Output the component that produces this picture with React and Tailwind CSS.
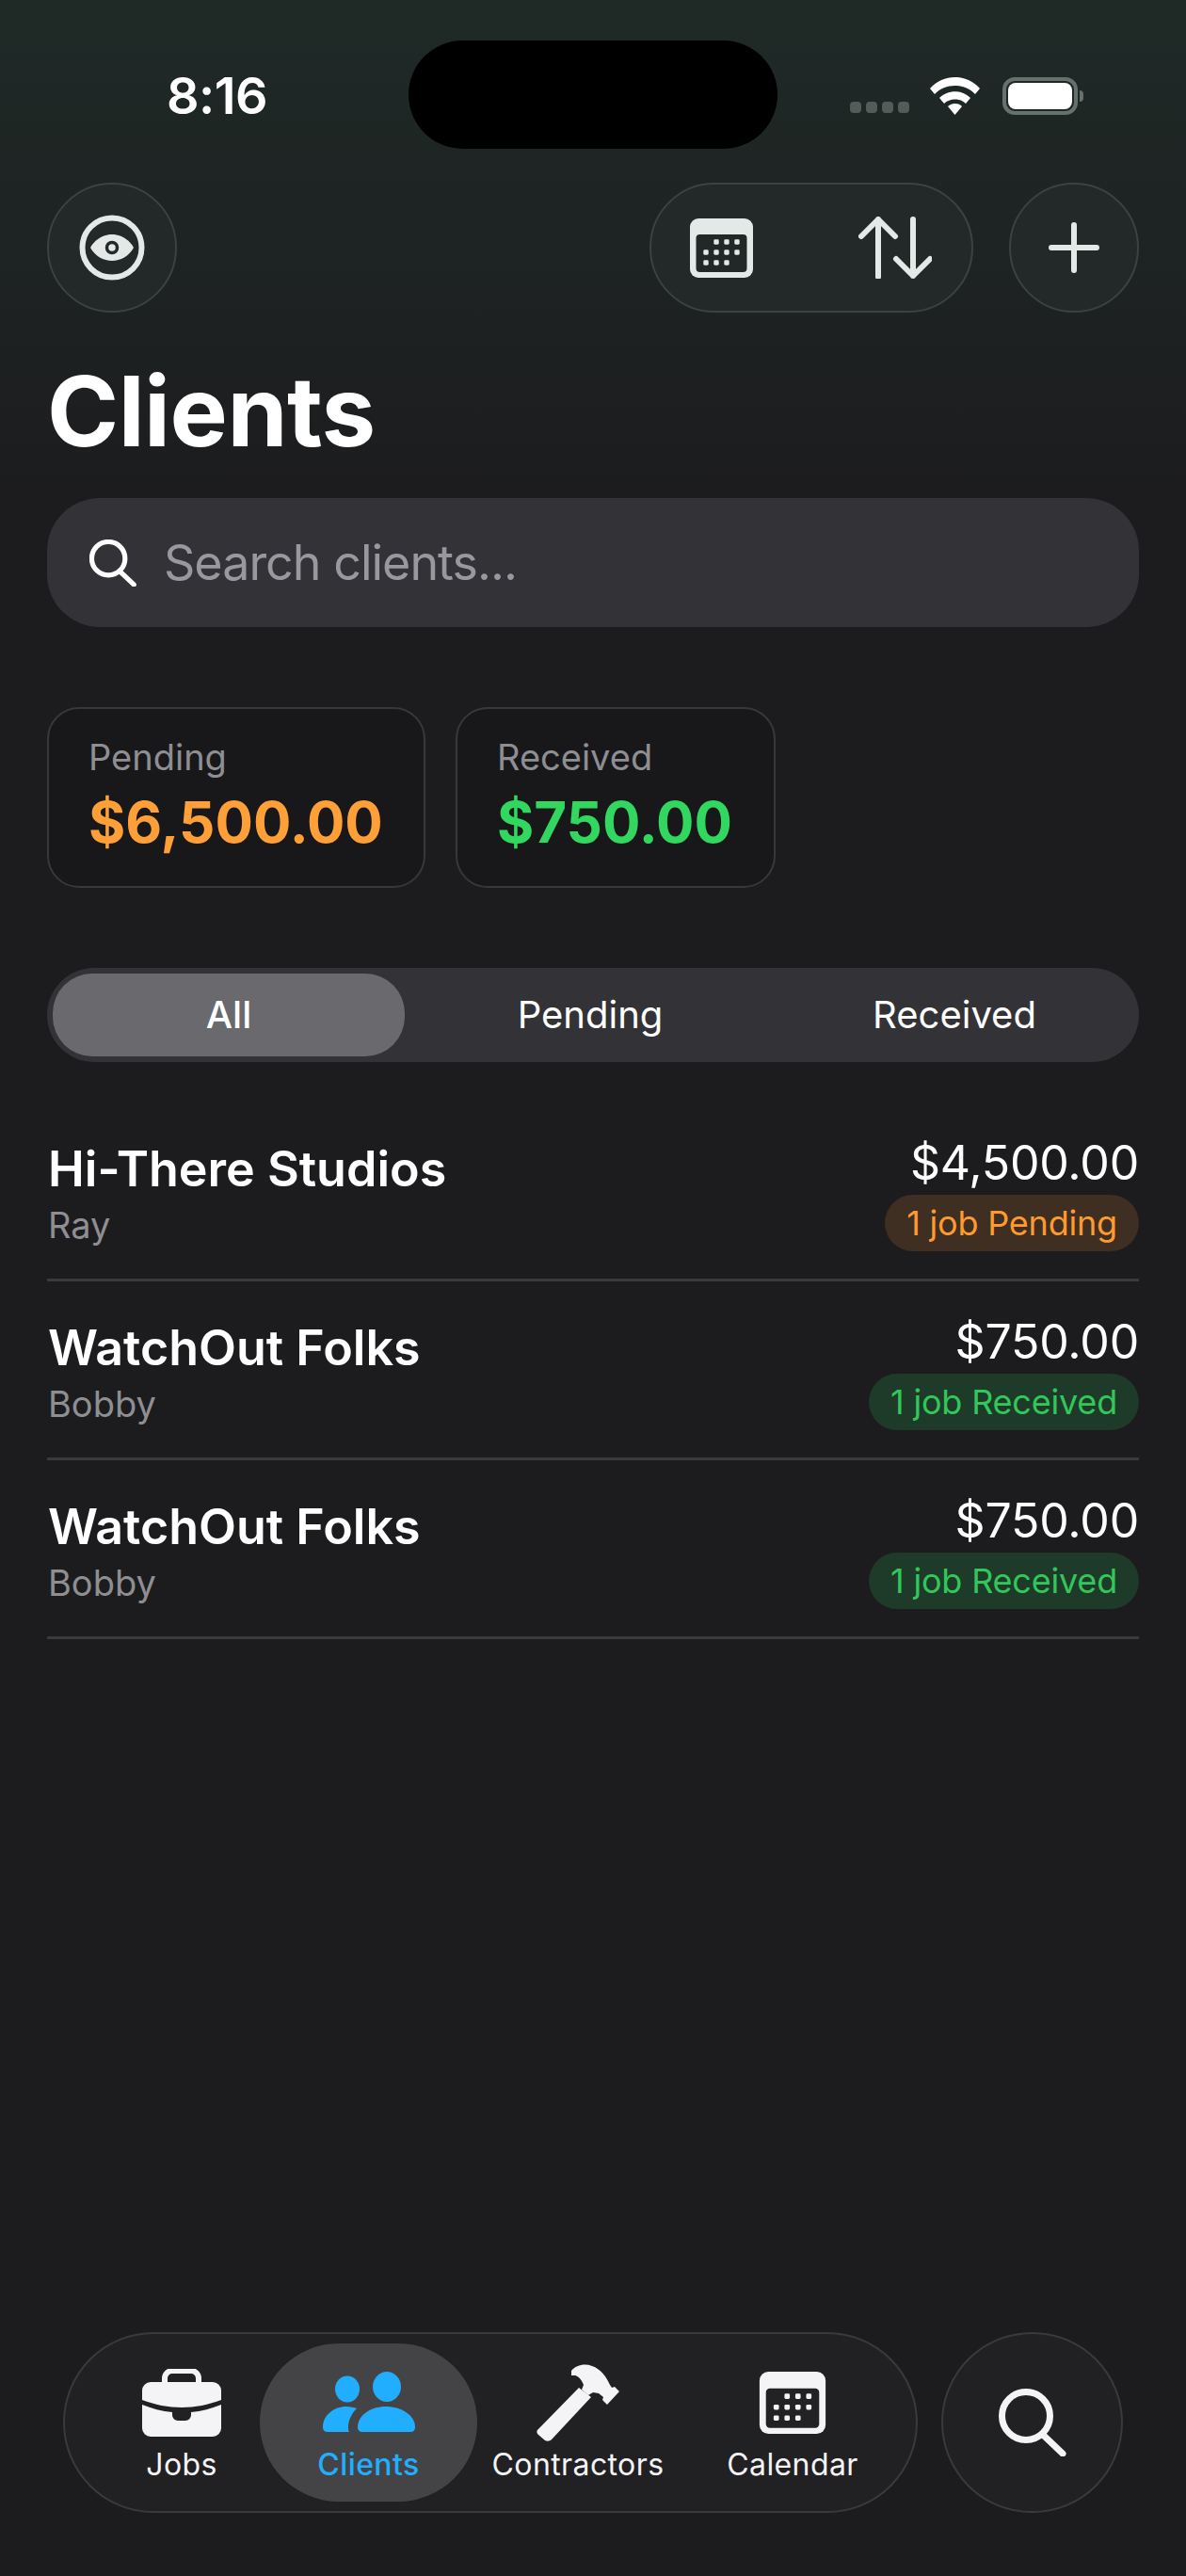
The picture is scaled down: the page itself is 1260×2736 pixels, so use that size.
import React from 'react';

const CalendarIcon = ({ className, hole = '#222828' }) => (
  <svg className={className} viewBox="0 0 67 63" fill="none">
    <rect width="67" height="63" rx="9" fill="currentColor" />
    <rect x="6.5" y="17" width="54" height="40" rx="4" fill={hole} />
    {[
      [28, 25], [39, 25], [50, 25],
      [17, 36], [28, 36], [39, 36], [50, 36],
      [17, 47], [28, 47], [39, 47],
    ].map(([x, y]) => (
      <rect key={`${x}-${y}`} x={x - 2.7} y={y - 2.7} width="5.4" height="5.4" rx="1.4" fill="currentColor" />
    ))}
  </svg>
);

const SearchIcon = ({ className, stroke = 7 }) => (
  <svg className={className} viewBox="0 0 72 72" fill="none" stroke="currentColor" strokeWidth={stroke} strokeLinecap="round">
    <circle cx="29" cy="29" r="25.5" />
    <path d="M47 49 L68 69" />
  </svg>
);

const Briefcase = ({ className }) => (
  <svg className={className} viewBox="0 0 84 72" fill="none">
    <path d="M24 17V10a8 8 0 0 1 8-8h20a8 8 0 0 1 8 8v7" stroke="currentColor" strokeWidth="6" />
    <path d="M9 14h66a9 9 0 0 1 9 9v10c-13 5-28 8-42 8s-29-3-42-8V23a9 9 0 0 1 9-9z" fill="currentColor" />
    <path d="M0 38c10 4 21 7 32 8v3a6 6 0 0 0 6 6h8a6 6 0 0 0 6-6v-3c11-1 22-4 32-8v25a9 9 0 0 1-9 9H9a9 9 0 0 1-9-9z" fill="currentColor" />
  </svg>
);

const Users = ({ className }) => (
  <svg className={className} viewBox="0 0 98 65" fill="currentColor">
    <ellipse cx="26" cy="18.5" rx="13" ry="14" />
    <ellipse cx="68" cy="16" rx="15" ry="16" />
    <path d="M0 59C0 46 12 37 25 37c4 0 8 1 11 2-5 5-9 12-9 20 0 2 0 4 1 5H5c-3 0-5-2-5-5z" />
    <path d="M37 59c0-13 14-22 30-22s31 9 31 22c0 3-2 5-5 5H42c-3 0-5-2-5-5z" />
  </svg>
);

const Hammer = ({ className }) => (
  <svg className={className} viewBox="0 0 88 83" fill="currentColor">
    <path d="M1 71 45 26l13 10-42 45c-2 2-5 2-7 1l-7-6c-2-2-2-4-1-5z" />
    <path d="M37 8c5-6 14-8 22-5 9 3 15 11 19 20l2 3 3-1 5 5-13 14-5-5 1-3-5-4-6-1-5 3-7-6 2-5c-2-5-5-9-9-10l-4 0z" />
  </svg>
);

const IconButton = ({ children }) => (
  <div className="flex h-[138px] w-[138px] items-center justify-center rounded-full border-2 border-[#3b4241] bg-[#222928] text-[#e4e8e6]">
    {children}
  </div>
);

const clients = [
  { name: 'Hi-There Studios', contact: 'Ray', amount: '$4,500.00', status: '1 job Pending', pending: true },
  { name: 'WatchOut Folks', contact: 'Bobby', amount: '$750.00', status: '1 job Received' },
  { name: 'WatchOut Folks', contact: 'Bobby', amount: '$750.00', status: '1 job Received' },
];

const tabs = [
  { label: 'Jobs', width: 'w-[166px]', icon: <Briefcase className="h-[72px] w-[84px]" /> },
  { label: 'Clients', width: 'w-[231px]', active: true, icon: <Users className="h-[65px] w-[98px]" /> },
  { label: 'Contractors', width: 'w-[214px]', icon: <Hammer className="h-[83px] w-[88px]" /> },
  { label: 'Calendar', width: 'w-[242px]', icon: <CalendarIcon className="h-[66px] w-[72px]" hole="#222224" /> },
];

export default function App() {
  return (
    <div className="flex min-h-[2736px] w-[1260px] flex-col bg-[#1c1c1e] font-['Inter',sans-serif] text-white">
      <div className="bg-linear-to-b from-[#1f2a27] to-[#1c1c1e] px-[50px] pb-[35px]">
        {/* status bar */}
        <div className="flex h-[194px] items-start pt-[43px]">
          <div className="w-[384px] pl-[127px] pt-[29px] text-[54px] leading-[60px] font-semibold tracking-[-0.5px]">8:16</div>
          <div className="h-[115px] w-[392px] rounded-[58px] bg-black" />
          <div className="ml-[77px] flex items-end pt-[39px]">
            <div className="mb-[2px] flex gap-[5px]">
              {[0, 1, 2, 3].map((i) => (
                <div key={i} className="h-[12px] w-[12px] rounded-[4px] bg-[#525c58]" />
              ))}
            </div>
            <svg className="ml-[22px] h-[40px] w-[53px]" viewBox="0 0 53 40" fill="white">
              <path d="M0 12C14-4 39-4 53 12l-5 6C37 6 16 6 5 18z" />
              <path d="M10 22c9-9 24-9 33 0l-5 6c-6-6-17-6-23 0z" />
              <path d="M19 31c4-4 11-4 15 0l-7.500 9z" />
            </svg>
            <div className="ml-[24px] flex items-center">
              <div className="h-[40px] w-[80px] rounded-[13px] border-[4px] border-[#66706c] p-[2px]">
                <div className="h-full w-full rounded-[8px] bg-white" />
              </div>
              <div className="ml-[2px] h-[12px] w-[4px] rounded-r-full bg-[#66706c]" />
            </div>
          </div>
        </div>

        {/* toolbar */}
        <div className="flex items-center justify-between">
          <IconButton>
            <svg className="h-[70px] w-[70px]" viewBox="0 0 70 70" fill="none">
              <circle cx="35" cy="35" r="31.5" stroke="currentColor" strokeWidth="6" />
              <path d="M12 35C17 26 26 21 35 21s18 5 23 14c-5 9-14 14-23 14s-18-5-23-14z" fill="currentColor" />
              <circle cx="35" cy="35" r="5.500" fill="currentColor" stroke="#222928" strokeWidth="3.500" />
            </svg>
          </IconButton>
          <div className="flex items-center">
            <div className="flex h-[138px] w-[344px] items-center rounded-full border-2 border-[#3b4241] bg-[#222928] pl-[41px] text-[#e4e8e6]">
              <CalendarIcon className="h-[63px] w-[67px]" />
              <svg className="ml-[112px] h-[66px] w-[78px]" viewBox="0 0 78 66" fill="none" stroke="currentColor" strokeWidth="6" strokeLinecap="round" strokeLinejoin="round">
                <path d="M21 64V3M3 21 21 3l18 18" />
                <path d="M58 3v60M40 45l18 18 18-18" />
              </svg>
            </div>
            <div className="ml-[38px]">
              <IconButton>
                <svg className="h-[54px] w-[54px]" viewBox="0 0 54 54" fill="none" stroke="currentColor" strokeWidth="6" strokeLinecap="round">
                  <path d="M27 3v48M3 27h48" />
                </svg>
              </IconButton>
            </div>
          </div>
        </div>

        <h1 className="mt-[48px] text-[103px] leading-[114px] font-bold tracking-[-0.5px]">Clients</h1>
      </div>

      <div className="px-[50px]">
        {/* search */}
        <div className="flex h-[137px] items-center rounded-[56px] bg-[#323237] pl-[45px]">
          <SearchIcon className="h-[50px] w-[50px] text-white" stroke={7.500} />
          <span className="ml-[29px] text-[52px] tracking-[-1px] text-[#98989e]">Search clients...</span>
        </div>

        {/* totals */}
        <div className="mt-[85px] flex gap-[32px]">
          <div className="h-[192px] w-[402px] rounded-[34px] border-2 border-[#38383b] bg-[#18181b] px-[42px] pt-[28px]">
            <div className="text-[38px] leading-[46px] text-[#8e8e93]">Pending</div>
            <div className="mt-[9px] text-[60px] leading-[74px] font-bold text-[#ff9f38]">$6,500.00</div>
          </div>
          <div className="h-[192px] w-[340px] rounded-[34px] border-2 border-[#38383b] bg-[#18181b] px-[42px] pt-[28px]">
            <div className="text-[38px] leading-[46px] text-[#8e8e93]">Received</div>
            <div className="mt-[9px] text-[60px] leading-[74px] font-bold text-[#32d75f]">$750.00</div>
          </div>
        </div>

        {/* filter */}
        <div className="mt-[85px] flex h-[100px] items-center rounded-[50px] bg-[#323237] p-[6px] text-center text-[40px]">
          <div className="flex h-[88px] w-[374px] items-center justify-center rounded-[42px] bg-[#69696e] font-medium">All</div>
          <div className="w-[394px]">Pending</div>
          <div className="w-[380px]">Received</div>
        </div>

        {/* client list */}
        <div className="mt-[43px]">
          {clients.map((client, i) => (
            <div key={i} className="flex h-[190px] justify-between border-b-[3px] border-[#3a3a3c]">
              <div className="pt-[38px] pl-[1px]">
                <div className="text-[52px] leading-[66px] font-[560]">{client.name}</div>
                <div className="mt-[3px] text-[38px] leading-[46px] text-[#8e8e93]">{client.contact}</div>
              </div>
              <div className="flex flex-col items-end pt-[35px]">
                <div className="text-[50px] leading-[58px] tracking-[-0.2px]">{client.amount}</div>
                <div
                  className={`mt-[5px] flex h-[60px] items-center rounded-[30px] px-[23px] text-[36px] tracking-[-0.2px] ${client.pending ? 'bg-[#3f2e22] text-[#ff9a2e]' : 'bg-[#1e3a28] text-[#32c75a]'}`}
                >
                  {client.status}
                </div>
              </div>
            </div>
          ))}
        </div>
      </div>

      {/* tab bar */}
      <div className="mt-auto mb-[67px] flex pl-[67px]">
        <div className="flex h-[192px] w-[908px] items-center rounded-[96px] border-2 border-[#3a3a3c] bg-[#212123] pl-[41px]">
          {tabs.map((tab) => (
            <div
              key={tab.label}
              className={`flex h-[168px] shrink-0 flex-col items-center rounded-[84px] ${tab.width} ${tab.active ? 'bg-[#444446] font-medium text-[#22aeff]' : 'text-[#f4f4f6]'}`}
            >
              <div className="flex h-[125px] shrink-0 items-center">{tab.icon}</div>
              <div className="-mt-[16px] text-[32px] leading-[40px] tracking-[0.4px]">{tab.label}</div>
            </div>
          ))}
        </div>
        <div className="ml-[25px] flex h-[192px] w-[193px] items-center justify-center rounded-full border-2 border-[#3a3a3c] bg-[#212123] text-[#f4f4f6]">
          <SearchIcon className="h-[72px] w-[72px]" />
        </div>
      </div>
    </div>
  );
}
